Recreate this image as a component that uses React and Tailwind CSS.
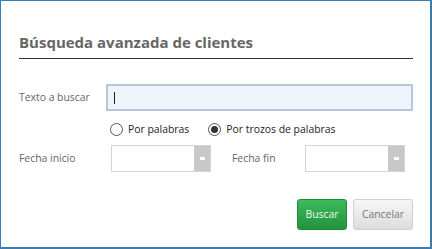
import React from "react";

const F = { fontFamily: "'Open Sans', 'DejaVu Sans', sans-serif" };

function Radio({ checked, label }) {
  return (
    <div className="flex items-center gap-[5px]">
      <div className="w-[13px] h-[13px] rounded-full border border-[#555] bg-white flex items-center justify-center">
        {checked && <div className="w-[7px] h-[7px] rounded-full bg-[#333]" />}
      </div>
      <span className="text-[10.4px] text-[#222] leading-none">{label}</span>
    </div>
  );
}

function DateInput() {
  return (
    <div className="w-[100px] h-[27px] border border-[#d4d4d4] bg-white flex justify-end">
      <div className="w-[16px] h-full bg-[#c8c8c8] flex items-center justify-center">
        <div className="w-[5px] h-[3px] bg-white" />
      </div>
    </div>
  );
}

export default function App() {
  return (
    <div
      style={F}
      className="w-[432px] h-[249px] bg-white border-t border-l border-r-2 border-b-2 border-[#3b7db2] pl-[18px] pr-[17px] flex flex-col"
    >
      <div className="pt-[31px] pb-[6px] border-b border-[#333]">
        <h1 className="text-[15px] font-bold text-[#666] leading-[20px]">
          Búsqueda avanzada de clientes
        </h1>
      </div>
      <div className="mt-[25px] flex items-center">
        <span className="w-[87px] text-[10.4px] text-[#666]">Texto a buscar</span>
        <div className="flex-1 h-[27px] border-2 border-[#b3c8dd] bg-[#eef4fb] flex items-center pl-[6px]">
          <div className="w-px h-[12px] bg-[#222]" />
        </div>
      </div>
      <div className="mt-[11px] pl-[91px] flex items-center gap-[19px] h-[14px]">
        <Radio label="Por palabras" />
        <Radio checked label="Por trozos de palabras" />
      </div>
      <div className="mt-[9px] flex items-center">
        <span className="w-[92px] text-[10.4px] text-[#666]">Fecha inicio</span>
        <DateInput />
        <span className="ml-[21px] w-[73px] text-[10.4px] text-[#666]">Fecha fin</span>
        <DateInput />
      </div>
      <div className="mt-[27px] flex justify-end gap-[6px]">
        <button className="w-[50px] h-[31px] rounded-[3px] border border-[#218a3a] bg-gradient-to-b from-[#3dbb5c] to-[#22923c] text-[#eefaf0] text-[10.4px]">
          Buscar
        </button>
        <button className="w-[60px] h-[31px] rounded-[3px] border border-[#cfcfcf] bg-gradient-to-b from-[#f7f7f7] to-[#dcdcdc] text-[#777] text-[10.4px]">
          Cancelar
        </button>
      </div>
    </div>
  );
}
